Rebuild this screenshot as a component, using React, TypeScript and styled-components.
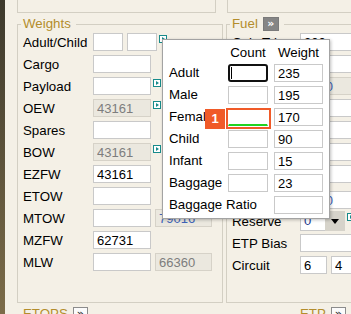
import styled, { createGlobalStyle } from "styled-components";

const GlobalStyle = createGlobalStyle`
  html, body {
    margin: 0;
    padding: 0;
    overflow: hidden;
    background: #f4f0e6;
  }
`;

const Page = styled.div`
  position: relative;
  display: flex;
  width: 351px;
  height: 314px;
  overflow: hidden;
  background: #f4f0e6;
  font: 13.3px "Liberation Sans", Arial, sans-serif;
  color: #000;
`;

const Edge = styled.div`
  width: 5px;
  flex-shrink: 0;
  background: linear-gradient(#3d392c, #7c6c49);
`;

const Main = styled.div`
  flex: 1;
  min-width: 0;
  padding-left: 12px;
  display: flex;
  flex-direction: column;
  overflow: hidden;
`;

const TopRow = styled.div`
  display: flex;
  flex-shrink: 0;
  height: 13px;
`;

const TopBox = styled.div<{ $w?: number }>`
  box-sizing: border-box;
  height: 13px;
  border: 1px solid #d3cfc3;
  border-top: none;
  ${(p) =>
    p.$w
      ? `width: ${p.$w}px; flex-shrink: 0;`
      : `flex: 1; border-right: none; margin-left: 11px;`}
`;

const SectionRow = styled.div<{ $mt: number }>`
  display: flex;
  flex-shrink: 0;
  margin-top: ${(p) => p.$mt}px;
`;

const Group = styled.fieldset<{ $w: number; $ml?: number; $pb?: number }>`
  box-sizing: border-box;
  flex-shrink: 0;
  width: ${(p) => p.$w}px;
  margin: 0 0 0 ${(p) => p.$ml ?? 0}px;
  min-width: 0;
  padding: 1px 4px ${(p) => p.$pb ?? 24}px 5px;
  border: 1px solid #d3cfc3;
`;

const Legend = styled.legend`
  margin-left: -2px;
  padding: 0 5px 0 2px;
  color: #b38d2c;
  font-size: 13.3px;
  line-height: 16px;
  white-space: nowrap;
`;

const Toggle = styled.span<{ $on?: boolean }>`
  display: inline-block;
  vertical-align: top;
  box-sizing: border-box;
  width: ${(p) => (p.$on ? 16 : 15)}px;
  height: 14px;
  margin: 1px 0 0 5px;
  border: 1px solid ${(p) => (p.$on ? "#7a7a7a" : "#8c8c8c")};
  background: ${(p) => (p.$on ? "#858585" : "#fbfbfb")};
  color: ${(p) => (p.$on ? "#fff" : "#333")};
  font: bold 11px/11px "DejaVu Sans", sans-serif;
  text-align: center;
`;

const Row = styled.div<{ $mt?: number; $mb?: number; $h?: number }>`
  display: flex;
  align-items: center;
  height: ${(p) => p.$h ?? 18}px;
  margin-top: ${(p) => p.$mt ?? 0}px;
  margin-bottom: ${(p) => p.$mb ?? 4}px;
`;

const Label = styled.span<{ $w: number }>`
  width: ${(p) => p.$w}px;
  flex-shrink: 0;
  white-space: nowrap;
`;

type Tone = "plain" | "muted" | "blue";

const toneColour: Record<Tone, string> = {
  plain: "#000",
  muted: "#7d7d7d",
  blue: "#3e63b8",
};

const Field = styled.input<{ $w: number; $tone?: Tone; $locked?: boolean }>`
  box-sizing: border-box;
  flex-shrink: 0;
  width: ${(p) => p.$w}px;
  height: 18px;
  margin: 0;
  padding: 0 3px;
  border: 1px solid ${(p) => (p.$locked ? "#d6d2c8" : "#c9c9c9")};
  background: ${(p) => (p.$locked ? "#ebe8df" : "#fff")};
  color: ${(p) => toneColour[p.$tone ?? "plain"]};
  font: 13px "Liberation Sans", Arial, sans-serif;
  outline: none;

  & + & {
    margin-left: 4px;
  }
`;

const JumpIcon = styled.svg`
  flex-shrink: 0;
  align-self: flex-start;
  margin: 2px 0 0 2px;
`;

function Jump() {
  return (
    <JumpIcon width="8" height="8" viewBox="0 0 8 8">
      <rect x="0.5" y="0.5" width="7" height="7" fill="#fff" stroke="#178b8b" />
      <path d="M3 2 L6 4 L3 6 Z" fill="#178b8b" />
    </JumpIcon>
  );
}

const Select = styled.div`
  display: flex;
  flex-shrink: 0;
  height: 20px;
`;

const SelectValue = styled.span`
  box-sizing: border-box;
  width: 25px;
  height: 20px;
  padding: 0 3px;
  border: 1px solid #c9c9c9;
  border-right: none;
  background: #fff;
  color: #1d3c8f;
  font-size: 13px;
  line-height: 18px;
`;

const SelectArrow = styled.span`
  width: 20px;
  height: 20px;
  background: #d6d3ca;
  display: flex;
  align-items: center;
  justify-content: center;
`;

/* passenger weight popup */

const Popup = styled.div`
  position: absolute;
  left: 162px;
  top: 39px;
  width: 168px;
  box-sizing: border-box;
  padding: 6px 6px 4px;
  display: grid;
  grid-template-columns: 53px 40px 49px;
  column-gap: 6px;
  row-gap: 4px;
  align-items: center;
  background: #fff;
  border: 1px solid #a3a3a3;
  box-shadow: 1px 1px 3px rgba(0, 0, 0, 0.25);
`;

const Head = styled.span`
  line-height: 14px;
  text-align: center;
  white-space: nowrap;
`;

const PopLabel = styled.span<{ $span?: number }>`
  grid-column: span ${(p) => p.$span ?? 1};
  line-height: 18px;
  white-space: nowrap;
`;

const Cell = styled.input<{ $state?: "focus" | "marked" }>`
  box-sizing: border-box;
  width: 100%;
  height: 18px;
  margin: 0;
  padding: 0 3px;
  border: 1px solid #c9c9c9;
  background: #fff;
  font: 13px "Liberation Sans", Arial, sans-serif;
  color: #000;
  outline: none;
  ${(p) =>
    p.$state === "focus" &&
    `border: 2px solid #111; border-radius: 3px;
     background: #fff linear-gradient(#000, #000) no-repeat 1px 1px / 1px 12px;`}
  ${(p) =>
    p.$state === "marked" &&
    `border-color: transparent; border-bottom: 2px solid #21d321;`}
`;

const Mark = styled.div`
  position: relative;
  height: 18px;
`;

const Outline = styled.span`
  position: absolute;
  left: -2px;
  top: 0;
  width: 45px;
  height: 21px;
  box-sizing: border-box;
  border: 2px solid #f05a28;
  pointer-events: none;
`;

const Badge = styled.span`
  position: absolute;
  left: -23px;
  top: 1px;
  width: 20px;
  height: 20px;
  background: #f05a28;
  color: #fff;
  font: bold 13px/20px "Liberation Sans", Arial, sans-serif;
  text-align: center;
`;

const passengers = [
  { label: "Adult", weight: "235" },
  { label: "Male", weight: "195" },
  { label: "Female", weight: "170" },
  { label: "Child", weight: "90" },
  { label: "Infant", weight: "15" },
  { label: "Baggage", weight: "23" },
];

export default function App() {
  return (
    <Page>
      <GlobalStyle />
      <Edge />
      <Main>
        <TopRow>
          <TopBox $w={199} />
          <TopBox />
        </TopRow>

        <SectionRow $mt={3}>
          <Group $w={206}>
            <Legend>Weights</Legend>
            <Row>
              <Label $w={70}>Adult/Child</Label>
              <Field $w={30} defaultValue="" />
              <Field $w={30} defaultValue="" />
              <Jump />
            </Row>
            <Row>
              <Label $w={70}>Cargo</Label>
              <Field $w={58} defaultValue="" />
            </Row>
            <Row>
              <Label $w={70}>Payload</Label>
              <Field $w={58} defaultValue="" />
              <Jump />
            </Row>
            <Row>
              <Label $w={70}>OEW</Label>
              <Field $w={58} $locked $tone="muted" readOnly defaultValue="43161" />
              <Jump />
            </Row>
            <Row>
              <Label $w={70}>Spares</Label>
              <Field $w={58} defaultValue="" />
            </Row>
            <Row>
              <Label $w={70}>BOW</Label>
              <Field $w={58} $locked $tone="muted" readOnly defaultValue="43161" />
              <Jump />
            </Row>
            <Row>
              <Label $w={70}>EZFW</Label>
              <Field $w={58} defaultValue="43161" />
            </Row>
            <Row>
              <Label $w={70}>ETOW</Label>
              <Field $w={58} defaultValue="" />
            </Row>
            <Row>
              <Label $w={70}>MTOW</Label>
              <Field $w={58} defaultValue="" />
              <Field $w={57} $locked $tone="blue" readOnly defaultValue="79016" />
            </Row>
            <Row>
              <Label $w={70}>MZFW</Label>
              <Field $w={58} defaultValue="62731" />
            </Row>
            <Row>
              <Label $w={70}>MLW</Label>
              <Field $w={58} defaultValue="" />
              <Field $w={57} $locked $tone="muted" readOnly defaultValue="66360" />
            </Row>
          </Group>

          <Group $w={160} $ml={3}>
            <Legend>
              Fuel<Toggle $on>»</Toggle>
            </Legend>
            <Row>
              <Label $w={68}>Calc Trip</Label>
              <Field $w={60} defaultValue="200" />
            </Row>
            <Row>
              <Label $w={68}>Alternate</Label>
              <Field $w={60} defaultValue="" />
            </Row>
            <Row>
              <Label $w={68}>Trip Fuel</Label>
              <Field $w={60} $locked $tone="blue" readOnly defaultValue="2150" />
            </Row>
            <Row>
              <Label $w={68}>Taxi</Label>
              <Field $w={60} defaultValue="" />
            </Row>
            <Row>
              <Label $w={68}>Hold</Label>
              <Field $w={60} defaultValue="" />
            </Row>
            <Row>
              <Label $w={68}>Extra</Label>
              <Field $w={60} defaultValue="" />
            </Row>
            <Row>
              <Label $w={68}>Cont %</Label>
              <Field $w={60} defaultValue="" />
            </Row>
            <Row $mt={8} $mb={2}>
              <Label $w={68}>Final Res</Label>
              <Field $w={60} $tone="blue" defaultValue="1800" />
            </Row>
            <Row $h={20} $mb={3}>
              <Label $w={68}>Reserve</Label>
              <Select>
                <SelectValue>0</SelectValue>
                <SelectArrow>
                  <svg width="8" height="5" viewBox="0 0 8 5">
                    <path d="M0 0 H8 L4 5 Z" fill="#000" />
                  </svg>
                </SelectArrow>
              </Select>
              <Jump />
            </Row>
            <Row>
              <Label $w={68}>ETP Bias</Label>
              <Field $w={60} defaultValue="" />
            </Row>
            <Row>
              <Label $w={68}>Circuit</Label>
              <Field $w={27} defaultValue="6" />
              <Field $w={27} defaultValue="4" />
            </Row>
          </Group>
        </SectionRow>

        <SectionRow $mt={3}>
          <Group $w={273} $pb={20}>
            <Legend>
              ETOPS<Toggle>»</Toggle>
            </Legend>
          </Group>
          <Group $w={120} $ml={4} $pb={20}>
            <Legend>
              ETP<Toggle>»</Toggle>
            </Legend>
          </Group>
        </SectionRow>
      </Main>

      <Popup>
        <span />
        <Head>Count</Head>
        <Head>Weight</Head>
        {passengers.map((p, i) => (
          <Passenger key={p.label} label={p.label} weight={p.weight} index={i} />
        ))}
        <PopLabel $span={2}>Baggage Ratio</PopLabel>
        <Cell defaultValue="" />
      </Popup>
    </Page>
  );
}

function Passenger({ label, weight, index }: { label: string; weight: string; index: number }) {
  return (
    <>
      <PopLabel>{label}</PopLabel>
      {index === 2 ? (
        <Mark>
          <Cell $state="marked" defaultValue="" />
          <Outline />
          <Badge>1</Badge>
        </Mark>
      ) : (
        <Cell $state={index === 0 ? "focus" : undefined} defaultValue="" />
      )}
      <Cell defaultValue={weight} />
    </>
  );
}
